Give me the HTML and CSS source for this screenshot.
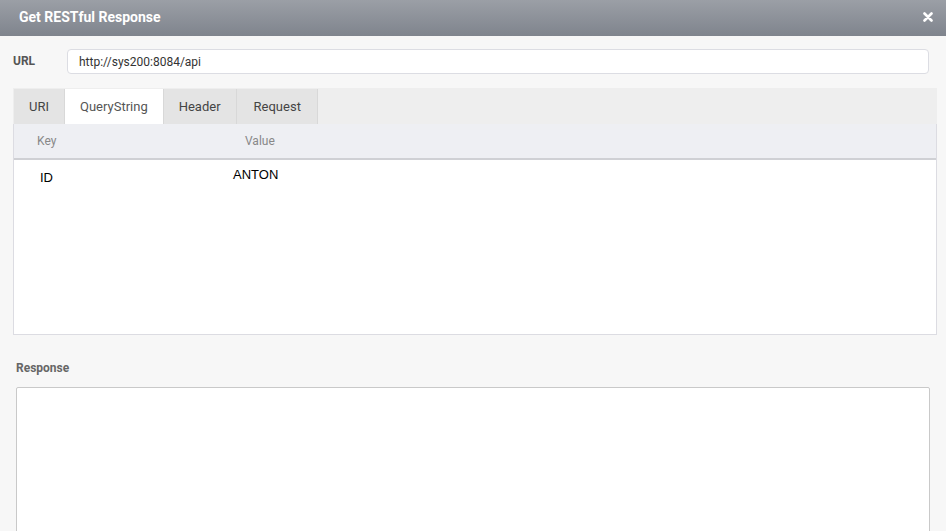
FILE: index.html
```html
<!DOCTYPE html>
<html lang="en">
<head>
  <meta charset="UTF-8" />
  <title>Get RESTful Response</title>
  <link rel="stylesheet" href="styles.css">
</head>
<body>

<div class="dialog">
  <div class="dialog-title">
    <span>Get RESTful Response</span>
    <button type="button" class="close-btn" aria-label="Close">
      <svg width="10" height="10" viewBox="0 0 10 10"><path d="M1.5 1.5 L8.5 8.5 M8.5 1.5 L1.5 8.5" stroke="#fff" stroke-width="2.6" stroke-linecap="round"/></svg>
    </button>
  </div>

  <div class="dialog-body">
    <div class="url-row">
      <label for="url">URL</label>
      <input type="text" id="url" value="http://sys200:8084/api">
    </div>

    <div class="tabs">
      <div class="tab-strip">
        <div class="tab">URI</div>
        <div class="tab active">QueryString</div>
        <div class="tab">Header</div>
        <div class="tab">Request</div>
      </div>
      <div class="tab-panel">
        <div class="grid-head">
          <div class="col-key">Key</div>
          <div class="col-value">Value</div>
        </div>
        <div class="grid-row">
          <div class="col-key cell-key">ID</div>
          <div class="col-value cell-value">ANTON</div>
        </div>
      </div>
    </div>

    <div class="response">
      <label for="response">Response</label>
      <textarea id="response"></textarea>
    </div>
  </div>
</div>

</body>
</html>
```

FILE: styles.css
```css
* {
  box-sizing: border-box;
}

html, body {
  margin: 0;
  height: 100%;
  overflow: hidden;
}

body {
  font-family: Roboto, 'Noto Sans', sans-serif;
  background: #f7f7f7;
}

.dialog {
  height: 100%;
  display: flex;
  flex-direction: column;
}

.dialog-title {
  height: 36px;
  flex-shrink: 0;
  display: flex;
  align-items: center;
  justify-content: space-between;
  padding: 0 12px 3px 19px;
  background: linear-gradient(#9b9fa6, #7f848d);
  color: #fff;
  font-weight: bold;
  font-size: 14px;
}

.close-btn {
  background: none;
  border: none;
  padding: 0;
  width: 12px;
  height: 12px;
  display: flex;
  align-items: center;
  justify-content: center;
  cursor: pointer;
}

.dialog-body {
  flex: 1;
  padding: 13px 9px 0 13px;
  overflow: hidden;
}

.url-row {
  display: flex;
  align-items: center;
}

.url-row label {
  width: 54px;
  font-size: 12px;
  font-weight: bold;
  color: #555;
  margin-top: -2px;
}

.url-row input {
  flex: 1;
  height: 25px;
  margin-right: 8px;
  border: 1px solid #dcdde3;
  border-radius: 4px;
  background: #fff;
  padding: 0 11px;
  font-family: Roboto, sans-serif;
  font-size: 12px;
  color: #333;
  outline: none;
}

.tabs {
  margin-top: 14px;
}

.tab-strip {
  display: flex;
  height: 36px;
  background: #eeeeee;
  padding: 1px 0 0 1px;
}

.tab {
  padding: 0 15px;
  display: flex;
  align-items: center;
  font-size: 13px;
  color: #444;
  background: #e4e4e4;
  border-right: 1px solid #d8d8d8;
}

.tab:last-child {
  padding: 0 16px 0 17px;
}

.tab.active {
  background: #fff;
  color: #555;
}

.tab-panel {
  height: 211px;
  background: #fff;
  border: 1px solid #dcdce2;
  border-top: none;
}

.grid-head {
  display: flex;
  height: 36px;
  align-items: center;
  background: #eeeff3;
  border-bottom: 2px solid #cfd0d4;
  font-size: 12px;
  color: #888;
}

.col-key {
  width: 231px;
  padding-left: 23px;
}

.col-value {
  flex: 1;
}

.grid-row {
  display: flex;
  font-family: 'Liberation Sans', Arial, sans-serif;
  font-size: 13px;
  color: #000;
}

.cell-key {
  padding-top: 10px;
  padding-left: 26px;
}

.cell-value {
  padding-top: 7px;
  margin-left: -12px;
}

.response {
  margin-top: 26px;
  padding-left: 3px;
  padding-right: 7px;
}

.response label {
  display: block;
  font-size: 12px;
  font-weight: bold;
  color: #666;
  margin-bottom: 12px;
}

.response textarea {
  display: block;
  width: 100%;
  height: 200px;
  border: 1px solid #c9c9c9;
  border-radius: 2px;
  background: #fff;
  resize: none;
  outline: none;
}
```
